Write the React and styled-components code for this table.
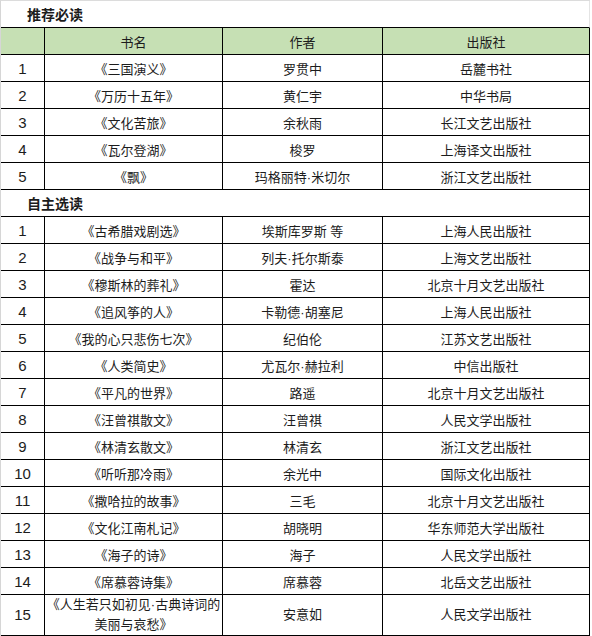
import React from "react";
import styled, { createGlobalStyle } from "styled-components";

const required = [
    ["1", "《三国演义》", "罗贯中", "岳麓书社"],
    ["2", "《万历十五年》", "黄仁宇", "中华书局"],
    ["3", "《文化苦旅》", "余秋雨", "长江文艺出版社"],
    ["4", "《瓦尔登湖》", "梭罗", "上海译文出版社"],
    ["5", "《飘》", "玛格丽特·米切尔", "浙江文艺出版社"],
];

const optional = [
    ["1", "《古希腊戏剧选》", "埃斯库罗斯 等", "上海人民出版社"],
    ["2", "《战争与和平》", "列夫·托尔斯泰", "上海文艺出版社"],
    ["3", "《穆斯林的葬礼》", "霍达", "北京十月文艺出版社"],
    ["4", "《追风筝的人》", "卡勒德·胡塞尼", "上海人民出版社"],
    ["5", "《我的心只悲伤七次》", "纪伯伦", "江苏文艺出版社"],
    ["6", "《人类简史》", "尤瓦尔·赫拉利", "中信出版社"],
    ["7", "《平凡的世界》", "路遥", "北京十月文艺出版社"],
    ["8", "《汪曾祺散文》", "汪曾祺", "人民文学出版社"],
    ["9", "《林清玄散文》", "林清玄", "浙江文艺出版社"],
    ["10", "《听听那冷雨》", "余光中", "国际文化出版社"],
    ["11", "《撒哈拉的故事》", "三毛", "北京十月文艺出版社"],
    ["12", "《文化江南札记》", "胡晓明", "华东师范大学出版社"],
    ["13", "《海子的诗》", "海子", "人民文学出版社"],
    ["14", "《席慕蓉诗集》", "席慕蓉", "北岳文艺出版社"],
];

const BookRow = ({ row, tall }) => (
    <>
        <Num tall={tall}>{row[0]}</Num>
        <Cell tall={tall}>{row[1]}</Cell>
        <Cell tall={tall}>{row[2]}</Cell>
        <Cell tall={tall}>{row[3]}</Cell>
    </>
);

const App = () => {
    return (
        <>
            <GlobalStyle />
            <Sheet>
                <SectionTitle>推荐必读</SectionTitle>
                <HeadCell />
                <HeadCell>书名</HeadCell>
                <HeadCell>作者</HeadCell>
                <HeadCell>出版社</HeadCell>
                {required.map((r) => (
                    <BookRow key={"a" + r[0]} row={r} />
                ))}
                <SectionTitle boxed>自主选读</SectionTitle>
                {optional.map((r) => (
                    <BookRow key={"b" + r[0]} row={r} />
                ))}
                <BookRow
                    tall
                    row={[
                        "15",
                        <>
                            《人生若只如初见·古典诗词的
                            <br />
                            美丽与哀愁》
                        </>,
                        "安意如",
                        "人民文学出版社",
                    ]}
                />
            </Sheet>
        </>
    );
};

export default App;

// 스타일 정의
const GlobalStyle = createGlobalStyle`
    body {
        margin: 0;
        background: #fff;
    }
`;

const Sheet = styled.div`
    display: grid;
    grid-template-columns: 44px 178px 160px 207px;
    width: 589px;
    border-left: 1px solid #d6d6d6;
    border-top: 1px solid #dcdcdc;
    font-family: "Liberation Sans", "Noto Sans CJK SC", sans-serif;
    font-size: 13px;
    color: #1c1c1c;
`;

const Cell = styled.div`
    display: flex;
    align-items: center;
    justify-content: center;
    text-align: center;
    white-space: nowrap;
    box-sizing: border-box;
    height: ${(p) => (p.tall ? "41px" : "27px")};
    line-height: ${(p) => (p.tall ? "20px" : "normal")};
    border-right: 1px solid #000;
    border-bottom: 1px solid #000;
    padding-top: ${(p) => (p.tall ? "0" : "1px")};
`;

const Num = styled(Cell)`
    font-size: 15px;
`;

const HeadCell = styled(Cell)`
    background: #c6e0b4;
`;

const SectionTitle = styled.div`
    grid-column: 1 / -1;
    display: flex;
    align-items: center;
    box-sizing: border-box;
    height: 27px;
    padding-left: 26px;
    font-weight: bold;
    font-size: 14px;
    border-bottom: 1px solid #000;
    border-right: 1px solid ${(p) => (p.boxed ? "#000" : "#e4e4e4")};
`;
